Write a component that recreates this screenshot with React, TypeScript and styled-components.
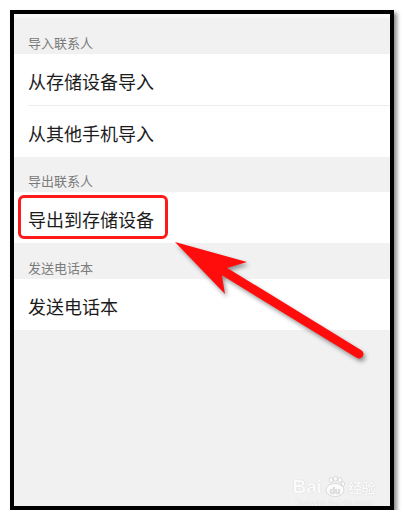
import styled, { createGlobalStyle } from "styled-components";

const GlobalStyle = createGlobalStyle`
  html, body {
    margin: 0;
    padding: 0;
    background: #ffffff;
  }
  body {
    font-family: "Noto Sans CJK SC", "Noto Sans", sans-serif;
  }
`;

const Frame = styled.div`
  position: relative;
  box-sizing: border-box;
  width: 384px;
  height: 500px;
  margin: 10px 0 0 10px;
  border: 4px solid #000;
  background: #f1f1f1;
  box-shadow: 3px 3px 4px rgba(0, 0, 0, 0.45);
  overflow: hidden;
`;

const TopStrip = styled.div`
  height: 4px;
  background: #f8f8f8;
`;

const SectionHeader = styled.div<{ $h: number }>`
  display: flex;
  align-items: flex-end;
  box-sizing: border-box;
  height: ${(p) => p.$h}px;
  padding: 0 0 5px 14px;
  font-size: 13px;
  line-height: 13px;
  color: #7b7b7b;
`;

const List = styled.div`
  background: #ffffff;
`;

const Row = styled.div`
  position: relative;
  display: flex;
  align-items: center;
  box-sizing: border-box;
  height: 51px;
  padding: 3px 0 0 14px;
  font-size: 18px;
  color: #1c1c1c;
`;

const Divider = styled.div`
  height: 1px;
  margin-left: 14px;
  background: #ececec;
`;

const Highlight = styled.div`
  position: absolute;
  left: 4px;
  top: 3px;
  width: 150px;
  height: 44px;
  box-sizing: border-box;
  border: 3px solid #ff1a1a;
  border-radius: 6px;
`;

const Arrow = styled.svg`
  position: absolute;
  left: 0;
  top: 0;
  width: 376px;
  height: 492px;
  filter: drop-shadow(2px 3px 2px rgba(0, 0, 0, 0.4));
  pointer-events: none;
`;

const Watermark = styled.div`
  position: absolute;
  right: 14px;
  bottom: -2px;
  display: flex;
  flex-direction: column;
  align-items: center;
  color: #ffffff;
  text-shadow: 0 0 1px rgba(0, 0, 0, 0.3);
  opacity: 0.75;
`;

const MarkTop = styled.div`
  display: flex;
  align-items: center;
  gap: 2px;
  font-family: "Liberation Sans", "Noto Sans CJK SC", sans-serif;
  font-size: 19px;
  font-weight: 700;
  line-height: 22px;
`;

const MarkCn = styled.span`
  font-family: "Noto Sans CJK SC", sans-serif;
  font-size: 14px;
  font-weight: 700;
`;

const MarkUrl = styled.div`
  font-family: "Liberation Sans", sans-serif;
  font-size: 9px;
  line-height: 10px;
  letter-spacing: 0.3px;
`;

const PawIcon = () => (
  <svg width="22" height="22" viewBox="0 0 22 22">
    <g fill="#fff" stroke="rgba(0,0,0,0.25)" strokeWidth="0.6">
      <ellipse cx="7" cy="4" rx="2" ry="2.5" />
      <ellipse cx="11.5" cy="2.8" rx="2" ry="2.4" />
      <ellipse cx="16" cy="4" rx="2" ry="2.5" />
      <ellipse cx="19" cy="8" rx="1.8" ry="2.2" />
      <ellipse cx="11" cy="14" rx="9" ry="6.5" />
    </g>
    <text x="11" y="17.5" textAnchor="middle" fontSize="9" fontWeight="700" fill="#d8d8d8" fontFamily="Liberation Sans, sans-serif">du</text>
  </svg>
);

export default function App() {
  return (
    <>
      <GlobalStyle />
      <Frame>
        <TopStrip />
        <SectionHeader $h={36}>导入联系人</SectionHeader>
        <List>
          <Row>从存储设备导入</Row>
          <Divider />
          <Row>从其他手机导入</Row>
        </List>
        <SectionHeader $h={35}>导出联系人</SectionHeader>
        <List>
          <Row>
            导出到存储设备
            <Highlight />
          </Row>
        </List>
        <SectionHeader $h={36}>发送电话本</SectionHeader>
        <List>
          <Row>发送电话本</Row>
        </List>

        {/* annotation arrow, drawn in page coordinates */}
        <Arrow viewBox="14 14 376 492">
          <line x1="222" y1="270" x2="359" y2="354" stroke="#ff0d0d" strokeWidth="9" strokeLinecap="round" />
          <polygon points="175,242 247,262 227,268 222,276 225,294" fill="#ff0d0d" />
        </Arrow>

        <Watermark>
          <MarkTop>
            Bai
            <PawIcon />
            <MarkCn>经验</MarkCn>
          </MarkTop>
          <MarkUrl>jingyan.baidu.com</MarkUrl>
        </Watermark>
      </Frame>
    </>
  );
}
